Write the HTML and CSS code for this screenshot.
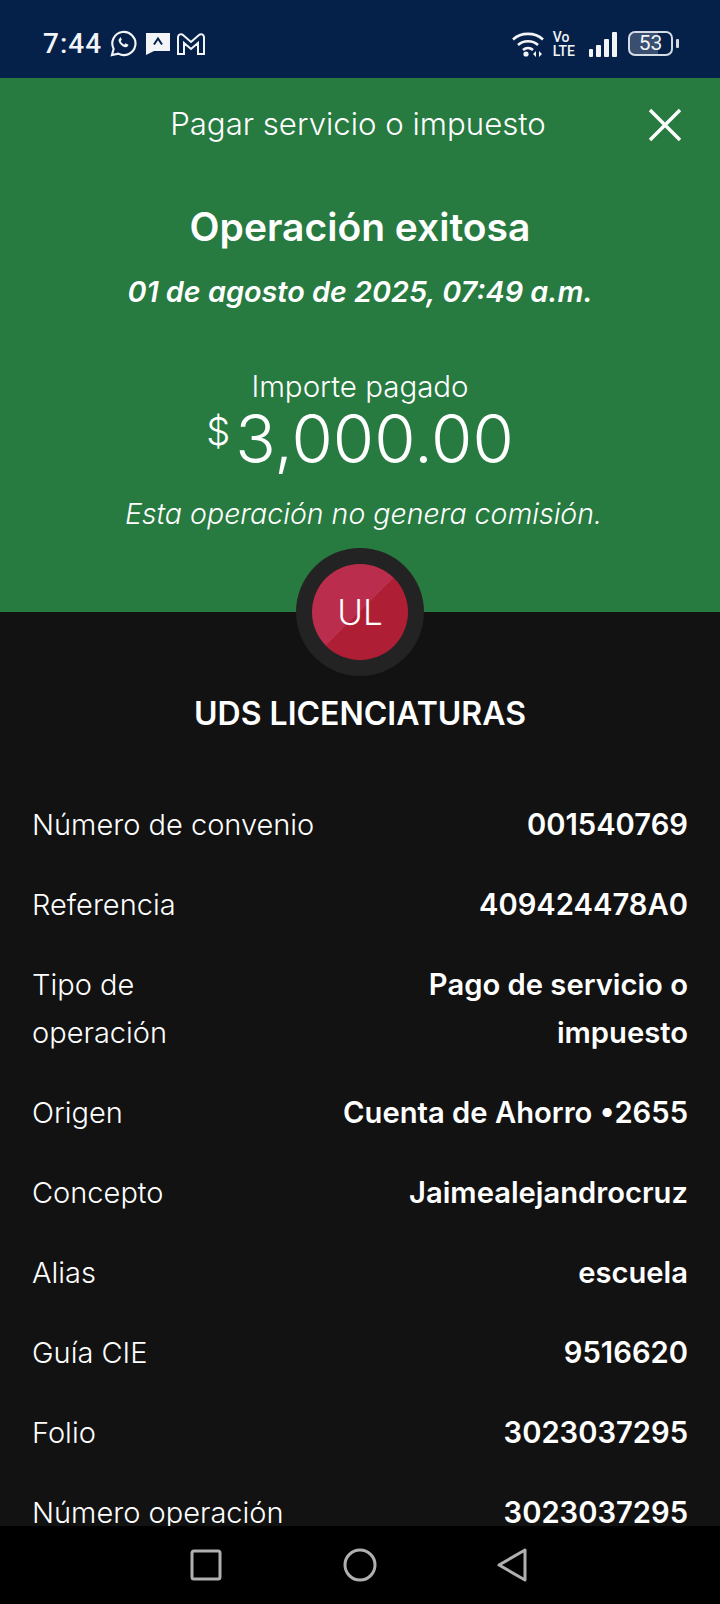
FILE: index.html
```html
<!DOCTYPE html>
<html lang="es">
<head>
    <meta charset="UTF-8">
    <meta name="viewport" content="width=device-width, initial-scale=1.0">
    <title>Pagar servicio o impuesto</title>
    <link rel="stylesheet" href="styles.css">
</head>
<body>
    <div class="status-bar">
        <div class="status-left">
            <span class="clock">7:44</span>
            <svg class="ic-whatsapp" width="27" height="27" viewBox="0 0 28 28" fill="none" stroke="#f2f4f7" stroke-width="2.200">
                <path d="M2 26l1.800-6.400A12 12 0 1 1 8.600 24.500z"/>
                <path d="M10 8.500c-1.500 1-1.600 3 .2 5.400 2 2.700 4.600 4.300 6.600 3.900 1.400-.3 2.200-1.300 2.300-2.500l-3-1.500-1.300 1.400c-1.600-.6-3-2-3.700-3.700l1.200-1.300-1.300-3z" fill="#f2f4f7" stroke="none"/>
            </svg>
            <svg class="ic-chat" width="24" height="22" viewBox="0 0 24 22">
                <path d="M0 0h24v18H8l-8 4z" fill="#f2f4f7"/>
                <path d="M8 11.500l4-6 4 6" fill="none" stroke="#042048" stroke-width="2"/>
            </svg>
            <svg class="ic-mail" width="28" height="22" viewBox="0 0 28 22" fill="none" stroke="#f2f4f7" stroke-width="2">
                <path d="M1 4a3 3 0 0 1 5-2l8 7 8-7a3 3 0 0 1 5 2v17h-6V10l-7 6-7-6v11H1z"/>
            </svg>
        </div>
        <div class="status-right">
            <svg width="32" height="26" viewBox="0 0 32 26" fill="none" stroke="#f2f4f7" stroke-width="2.600">
                <path d="M1 8.500c8-7.500 22-7.500 30 0"/>
                <path d="M6 14c5.500-5 14.500-5 20 0"/>
                <path d="M11 19c3-2.600 7-2.600 10 0" />
                <circle cx="14" cy="23" r="2.600" fill="#f2f4f7" stroke="none"/>
                <path d="M24 20v6l-3-3zM27 20v6l3-3z" fill="#f2f4f7" stroke="none"/>
            </svg>
            <div class="volte"><span>Vo</span><span>LTE</span></div>
            <div class="signal">
                <i class="b1"></i><i class="b2"></i><i class="b3"></i><i class="b4"></i>
            </div>
            <div class="battery"><span class="battery-body">53</span><span class="battery-tip"></span></div>
        </div>
    </div>

    <main class="content">
        <section class="hero">
            <header class="hero-top">
                <h1>Pagar servicio o impuesto</h1>
                <svg class="close" width="34" height="34" viewBox="0 0 34 34" stroke="#fff" stroke-width="3.400">
                    <path d="M2 2l30 30M32 2L2 32"/>
                </svg>
            </header>
            <h2>Operación exitosa</h2>
            <p class="date">01 de agosto de 2025, 07:49 a.m.</p>
            <p class="amount-label">Importe pagado</p>
            <p class="amount"><sup>$</sup>3,000.00</p>
            <p class="note">Esta operación no genera comisión.</p>
            <div class="avatar"><div class="avatar-inner">UL</div></div>
        </section>

        <h3 class="company">UDS LICENCIATURAS</h3>

        <dl class="details">
            <div class="row"><dt>Número de convenio</dt><dd>001540769</dd></div>
            <div class="row"><dt>Referencia</dt><dd>409424478A0</dd></div>
            <div class="row"><dt class="narrow">Tipo de operación</dt><dd class="narrow-value">Pago de servicio o impuesto</dd></div>
            <div class="row"><dt>Origen</dt><dd>Cuenta de Ahorro •2655</dd></div>
            <div class="row"><dt>Concepto</dt><dd>Jaimealejandrocruz</dd></div>
            <div class="row"><dt>Alias</dt><dd>escuela</dd></div>
            <div class="row"><dt>Guía CIE</dt><dd>9516620</dd></div>
            <div class="row"><dt>Folio</dt><dd>3023037295</dd></div>
            <div class="row"><dt>Número operación</dt><dd>3023037295</dd></div>
        </dl>
    </main>

    <nav class="nav-bar">
        <svg width="32" height="32" viewBox="0 0 32 32" fill="none" stroke="#b0b0b0" stroke-width="3">
            <rect x="2" y="2" width="28" height="28" rx="2"/>
        </svg>
        <svg width="34" height="34" viewBox="0 0 34 34" fill="none" stroke="#b0b0b0" stroke-width="3">
            <circle cx="17" cy="17" r="15"/>
        </svg>
        <svg width="30" height="34" viewBox="0 0 30 34" fill="none" stroke="#b0b0b0" stroke-width="3" stroke-linejoin="round">
            <path d="M2 17L28 2v30z"/>
        </svg>
    </nav>
</body>
</html>
```

FILE: styles.css
```css
* {
    box-sizing: border-box;
}
html, body {
    margin: 0;
    padding: 0;
}
body {
    width: 720px;
    height: 1604px;
    display: flex;
    flex-direction: column;
    overflow: hidden;
    background: #121212;
    color: #fff;
    font-family: Inter, 'Liberation Sans', sans-serif;
}
h1, h2, h3, p, dl, dd {
    margin: 0;
}

/* status bar */
.status-bar {
    height: 78px;
    flex: none;
    background: #052149;
    display: flex;
    justify-content: space-between;
    align-items: center;
    padding: 9px 41px 0 43px;
    color: #f2f4f7;
}
.status-left {
    display: flex;
    align-items: center;
}
.clock {
    font-family: Roboto, sans-serif;
    font-size: 28px;
    font-weight: 500;
    letter-spacing: 1px;
    margin-right: 8px;
}
.ic-chat {
    margin-left: 9px;
}
.ic-mail {
    margin-left: 7px;
}
.status-right {
    display: flex;
    align-items: center;
}
.volte {
    display: flex;
    flex-direction: column;
    font-family: Roboto, sans-serif;
    font-size: 14px;
    font-weight: 500;
    line-height: 14px;
    margin: 0 14px 0 9px;
}
.signal {
    display: flex;
    align-items: flex-end;
    gap: 3px;
    height: 26px;
    margin-right: 11px;
}
.signal i {
    width: 4px;
    background: #f2f4f7;
    border-radius: 1px;
}
.signal .b1 { height: 8px; }
.signal .b2 { height: 12px; width: 5px; }
.signal .b3 { height: 18px; width: 5px; }
.signal .b4 { height: 25px; width: 5px; }
.battery {
    display: flex;
    align-items: center;
    gap: 3px;
}
.battery-body {
    width: 45px;
    height: 25px;
    border: 2px solid #d5dbe5;
    border-radius: 7px;
    background: linear-gradient(90deg, #3a4f70 68%, #052149 68%);
    font-family: Roboto, sans-serif;
    font-size: 21px;
    line-height: 21px;
    text-align: center;
}
.battery-tip {
    width: 3px;
    height: 9px;
    background: #d5dbe5;
    border-radius: 1px;
}

/* page */
.content {
    flex: 1;
    min-height: 0;
    overflow: hidden;
}
.hero {
    position: relative;
    height: 534px;
    background: #277a40;
    text-align: center;
}
.hero-top {
    position: relative;
    padding: 26px 4px 0 0;
    height: 92px;
}
.hero-top h1 {
    font-size: 31.2px;
    font-weight: 300;
    line-height: 40px;
}
.close {
    position: absolute;
    top: 30px;
    right: 38px;
}
.hero h2 {
    font-size: 39px;
    font-weight: 600;
    line-height: 48px;
    margin-top: 33px;
}
.date {
    font-size: 28.8px;
    font-weight: 600;
    font-style: italic;
    line-height: 40px;
    margin-top: 21px;
}
.amount-label {
    font-size: 29.500px;
    font-weight: 300;
    line-height: 34px;
    margin-top: 57px;
}
.amount {
    font-size: 67px;
    font-weight: 300;
    line-height: 66px;
    margin-top: 3px;
}
.amount sup {
    font-size: 38px;
    line-height: 0;
    vertical-align: 18px;
    margin-right: 5px;
}
.note {
    font-size: 28.500px;
    font-weight: 300;
    font-style: italic;
    line-height: 40px;
    margin-top: 22px;
    padding-left: 7px;
}
.avatar {
    position: absolute;
    left: 296px;
    top: 470px;
    width: 128px;
    height: 128px;
    border-radius: 50%;
    background: #232323;
    display: flex;
    align-items: center;
    justify-content: center;
}
.avatar-inner {
    width: 96px;
    height: 96px;
    border-radius: 50%;
    background: linear-gradient(135deg, #bb2d4c 50%, #ae1f36 50%);
    display: flex;
    align-items: center;
    justify-content: center;
    font-size: 35px;
    font-weight: 300;
}
.company {
    text-align: center;
    font-size: 32px;
    font-weight: 600;
    line-height: 40px;
    margin-top: 82px;
}

/* detail rows */
.details {
    padding: 0 32px;
    margin-top: 67px;
}
.row {
    display: flex;
    justify-content: space-between;
    gap: 24px;
    margin-bottom: 32px;
    line-height: 48px;
    font-size: 29px;
}
.row dt {
    font-weight: 300;
}
.row dd {
    font-size: 29.2px;
    font-weight: 600;
    text-align: right;
}
.narrow {
    width: 190px;
}
.narrow-value {
    width: 300px;
}

/* android nav */
.nav-bar {
    height: 78px;
    flex: none;
    background: #000;
    display: flex;
    align-items: center;
    justify-content: space-between;
    padding: 0 193px 0 190px;
}
```
